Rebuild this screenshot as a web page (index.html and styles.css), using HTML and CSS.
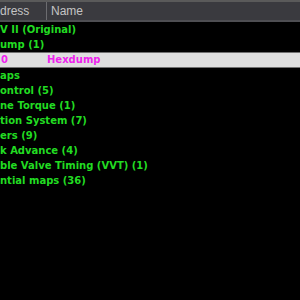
FILE: index.html
```
<!DOCTYPE html>
<html>
<head>
<meta charset="utf-8">
<link rel="stylesheet" href="styles.css">
</head>
<body>
<div class="view">
  <div class="header">
    <div class="hcell addr">dress</div>
    <div class="hcell name">Name</div>
  </div>
  <div class="rows">
    <div class="row tree">V II (Original)</div>
    <div class="row tree">ump (1)</div>
    <div class="row sel"><span class="cell addr">0</span><span class="cell name">Hexdump</span></div>
    <div class="row tree">aps</div>
    <div class="row tree">ontrol (5)</div>
    <div class="row tree">ne Torque (1)</div>
    <div class="row tree">tion System (7)</div>
    <div class="row tree">ers (9)</div>
    <div class="row tree">k Advance (4)</div>
    <div class="row tree">ble Valve Timing (VVT) (1)</div>
    <div class="row tree">ntial maps (36)</div>
  </div>
</div>
</body>
</html>
```
FILE: styles.css
```
html, body {
  margin: 0;
  padding: 0;
  background: #000;
}
.view {
  width: 300px;
  height: 300px;
  overflow: hidden;
  background: #000;
  font-family: "DejaVu Sans", Verdana, sans-serif;
}
.header {
  display: flex;
  height: 18px;
  background: #3a3a3f;
  border-top: 2px solid #5a5a5a;
  border-bottom: 2px solid #4e4e52;
  font-family: "Liberation Sans", Arial, sans-serif;
}
.hcell {
  color: #c4c4c4;
  font-size: 12px;
  line-height: 18px;
  white-space: nowrap;
}
.hcell.addr {
  width: 47px;
  border-right: 1px solid #6c6c70;
  box-sizing: border-box;
}
.hcell.name {
  padding-left: 4px;
}
.rows {
  display: flex;
  flex-direction: column;
}
.row {
  height: 15px;
  line-height: 15px;
  font-size: 10px;
  font-weight: bold;
  white-space: nowrap;
  color: #22dc22;
  overflow: hidden;
}
.row.sel {
  display: flex;
  height: 14px;
  line-height: 14px;
  background: #dedede;
  border-top: 1px solid #707070;
  border-bottom: 1px solid #707070;
  color: #ee22ee;
}
.cell.addr {
  width: 47px;
  padding-left: 1px;
  box-sizing: border-box;
}
```
